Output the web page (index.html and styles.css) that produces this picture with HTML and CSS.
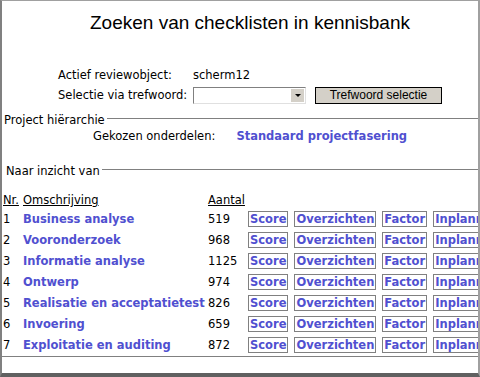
FILE: index.html
```html
<!DOCTYPE html>
<html lang="nl">
<head>
    <meta charset="UTF-8">
    <title>Zoeken van checklisten in kennisbank</title>
    <link rel="stylesheet" href="styles.css">
</head>
<body>
    <div class="window">
        <h1>Zoeken van checklisten in kennisbank</h1>

        <div class="info">
            <span>Actief reviewobject:</span>
            <span>scherm12</span>
            <span>Selectie via trefwoord:</span>
            <span class="controls">
                <span class="select"><span class="arrow"></span></span>
                <button type="button" class="btn">Trefwoord selectie</button>
            </span>
        </div>

        <div class="legend">Project hiërarchie</div>
        <div class="chosen">
            <span>Gekozen onderdelen:</span>
            <span class="link">Standaard projectfasering</span>
        </div>

        <div class="legend legend-second">Naar inzicht van</div>

        <div class="list">
            <div class="row head">
                <u>Nr.</u><u>Omschrijving</u><u>Aantal</u><span></span>
            </div>
            <div class="row">
                <span>1</span><span class="link">Business analyse</span><span>519</span>
                <span class="acts"><span class="act">Score</span><span class="act">Overzichten</span><span class="act">Factor</span><span class="act">Inplannen</span></span>
            </div>
            <div class="row">
                <span>2</span><span class="link">Vooronderzoek</span><span>968</span>
                <span class="acts"><span class="act">Score</span><span class="act">Overzichten</span><span class="act">Factor</span><span class="act">Inplannen</span></span>
            </div>
            <div class="row">
                <span>3</span><span class="link">Informatie analyse</span><span>1125</span>
                <span class="acts"><span class="act">Score</span><span class="act">Overzichten</span><span class="act">Factor</span><span class="act">Inplannen</span></span>
            </div>
            <div class="row">
                <span>4</span><span class="link">Ontwerp</span><span>974</span>
                <span class="acts"><span class="act">Score</span><span class="act">Overzichten</span><span class="act">Factor</span><span class="act">Inplannen</span></span>
            </div>
            <div class="row">
                <span>5</span><span class="link">Realisatie en acceptatietest</span><span>826</span>
                <span class="acts"><span class="act">Score</span><span class="act">Overzichten</span><span class="act">Factor</span><span class="act">Inplannen</span></span>
            </div>
            <div class="row">
                <span>6</span><span class="link">Invoering</span><span>659</span>
                <span class="acts"><span class="act">Score</span><span class="act">Overzichten</span><span class="act">Factor</span><span class="act">Inplannen</span></span>
            </div>
            <div class="row">
                <span>7</span><span class="link">Exploitatie en auditing</span><span>872</span>
                <span class="acts"><span class="act">Score</span><span class="act">Overzichten</span><span class="act">Factor</span><span class="act">Inplannen</span></span>
            </div>
        </div>

        <div class="footer"></div>
    </div>
</body>
</html>
```

FILE: styles.css
```css
body {
    margin: 0;
    font-family: "DejaVu Sans", Verdana, sans-serif;
    font-size: 11.5px;
    color: #000;
    background: #fff;
}
.window {
    width: 476px;
    height: 372px;
    border-left: 2px solid #808080;
    border-top: 1px solid #a0a0a0;
    border-right: 2px solid #a0a0a0;
    border-bottom: 4px solid #606060;
    overflow: hidden;
}
h1 {
    margin: 10px 0 0 0;
    padding-left: 20px;
    font-family: "Liberation Sans", Arial, sans-serif;
    font-size: 19px;
    font-weight: normal;
    text-align: center;
    line-height: 24px;
}
.info {
    display: grid;
    grid-template-columns: 135px auto;
    grid-auto-rows: 18px;
    row-gap: 2px;
    align-items: center;
    margin: 31px 0 0 56px;
}
.controls {
    display: flex;
    align-items: center;
    gap: 9px;
}
.select {
    width: 111px;
    height: 15px;
    border: 1px solid #808080;
    border-right-color: #e0e0e0;
    border-bottom-color: #e0e0e0;
    position: relative;
}
.arrow {
    position: absolute;
    right: 1px;
    top: 1px;
    width: 13px;
    height: 13px;
    background: #d4d0c8;
}
.arrow::after {
    content: "";
    position: absolute;
    left: 4px;
    top: 5px;
    border-left: 3px solid transparent;
    border-right: 3px solid transparent;
    border-top: 3px solid #000;
}
.btn {
    width: 127px;
    height: 17px;
    padding: 0;
    border: 1px solid #000;
    background: #d4d0c8;
    font-family: "Liberation Sans", Arial, sans-serif;
    font-size: 12px;
    color: #000;
}
.legend {
    display: flex;
    align-items: center;
    margin-top: 9px;
    padding-left: 2px;
    line-height: 14px;
}
.legend::after {
    content: "";
    flex: 1;
    border-top: 1px solid #808080;
    margin: -3px 0 0 2px;
}
.legend-second {
    margin-top: 21px;
    padding-left: 4px;
}
.chosen {
    display: flex;
    gap: 21px;
    padding-left: 91px;
    margin-top: 2px;
    line-height: 14px;
}
.link {
    color: #5050d0;
    font-weight: bold;
}
.list {
    margin-top: 14px;
    white-space: nowrap;
}
.row {
    display: grid;
    grid-template-columns: 20px 185px 40px max-content;
    align-items: center;
    height: 21px;
    padding-left: 1px;
}
.row.head {
    height: 16px;
}
.acts {
    display: flex;
    gap: 6px;
    align-items: center;
}
.act {
    border: 1px solid #808080;
    padding: 0 1px;
    line-height: 14px;
    color: #5050d0;
    font-weight: bold;
}
.footer {
    margin-top: 1px;
    border-top: 1px solid #808080;
}
```
